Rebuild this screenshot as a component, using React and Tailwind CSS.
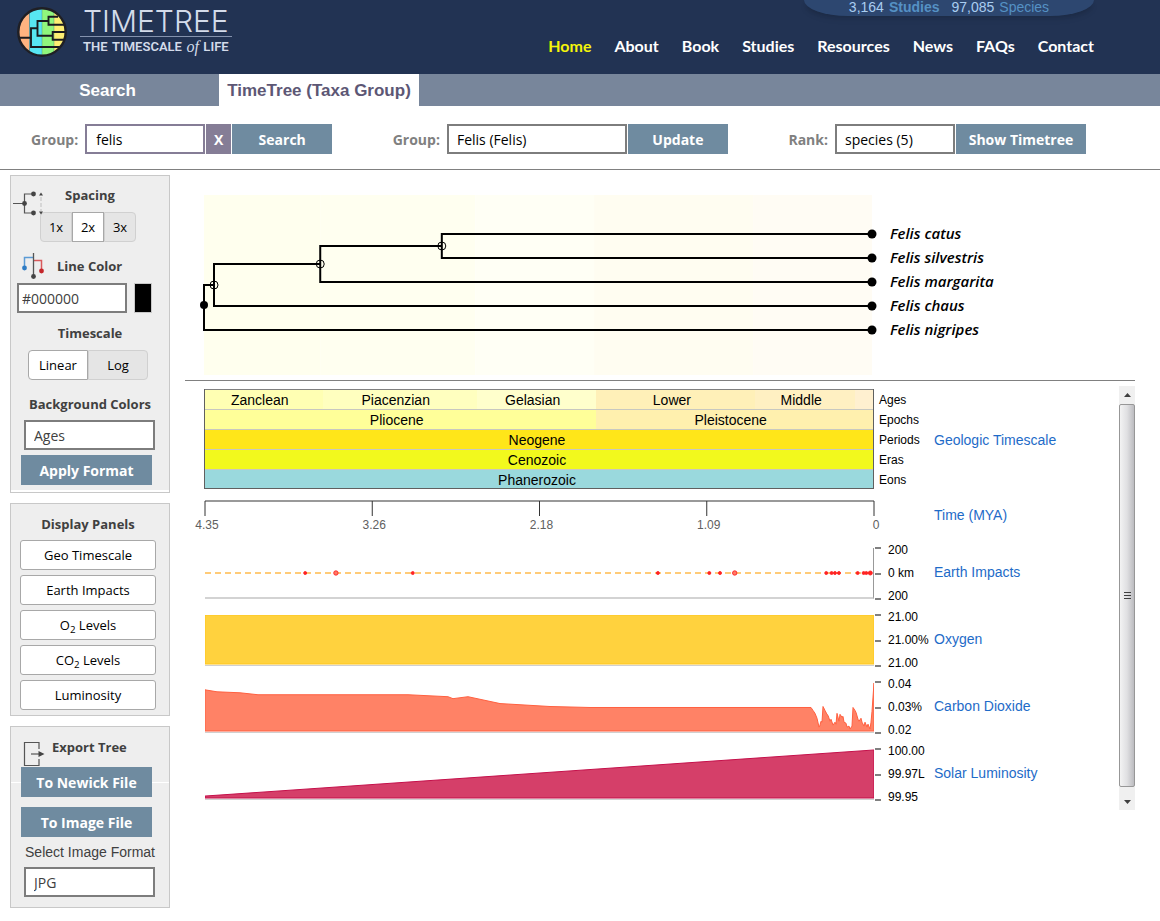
import { useState } from "react";
import clsx from "clsx";

const NAV_LINKS = ["Home", "About", "Book", "Studies", "Resources", "News", "FAQs", "Contact"];

const SPECIES = ["Felis catus", "Felis silvestris", "Felis margarita", "Felis chaus", "Felis nigripes"];

// Background stripes behind the tree, one per age (width in % of the plot)
const AGE_STRIPES = [
  { x: 0, width: 17.4, color: "#ffffee" },
  { x: 17.4, width: 23.2, color: "#fffff0" },
  { x: 40.6, width: 17.8, color: "#fffff5" },
  { x: 58.4, width: 23.8, color: "#fffdf1" },
  { x: 82.2, width: 17.8, color: "#fffcf4" },
];

// Tree branches as [x1%, y1, x2%, y2]
const BRANCHES = [
  [0, 89, 0, 136],
  [0, 90, 1.5, 90],
  [0, 135, 100, 135],
  [1.5, 68, 1.5, 112],
  [1.5, 69, 17.4, 69],
  [1.5, 111, 100, 111],
  [17.4, 50, 17.4, 88],
  [17.4, 51, 35.6, 51],
  [17.4, 87, 100, 87],
  [35.6, 38, 35.6, 64],
  [35.6, 39, 100, 39],
  [35.6, 63, 100, 63],
];

const OPEN_NODES = [
  [1.5, 90],
  [17.4, 69],
  [35.6, 51],
];

const GEO_ROWS = [
  {
    label: "Ages",
    cells: [
      { name: "Zanclean", width: 17.6, color: "#ffffb3" },
      { name: "Piacenzian", width: 23.1, color: "#ffffbf" },
      { name: "Gelasian", width: 17.9, color: "#ffffcc" },
      { name: "Lower", width: 23.8, color: "#fff0b8" },
      { name: "Middle", width: 14.9, color: "#fff0c2" },
      { name: "", width: 2.7, color: "#fff0d0" },
    ],
  },
  {
    label: "Epochs",
    cells: [
      { name: "Pliocene", width: 58.6, color: "#ffff99" },
      { name: "Pleistocene", width: 41.4, color: "#fff0ae" },
    ],
  },
  { label: "Periods", cells: [{ name: "Neogene", width: 100, color: "#ffe619" }] },
  { label: "Eras", cells: [{ name: "Cenozoic", width: 100, color: "#f2f91d" }] },
  { label: "Eons", cells: [{ name: "Phanerozoic", width: 100, color: "#9ad9dd" }] },
];

const TIME_TICKS = [
  { x: 0, label: "4.35" },
  { x: 25, label: "3.26" },
  { x: 50, label: "2.18" },
  { x: 75, label: "1.09" },
  { x: 100, label: "0" },
];

// Impact craters: position in % and radius
const IMPACTS = [
  [15, 1.5], [19.6, 2.2], [31.1, 1.5], [67.8, 1.5], [75.5, 1.5], [77.1, 1.5], [79.3, 2.2],
  [93, 1.5], [93.8, 1.5], [94.3, 1.5], [94.9, 1.5], [97.7, 1.5], [98.6, 1.5], [99, 1.5], [99.6, 2],
];

const CO2_POINTS =
  "0,50 0,8 12,10 35,11 53,13 203,13 243,15 248,17 263,15 295,22 345,25 385,26 606,26 608,29 610,32 612,37 " +
  "614,46 615,44 616,40 617,41 618,25 620,29 622,33 623,34 625,40 626,38 628,44 630,41 631,43 632,32 634,40 " +
  "635,33 637,36 638,35 639,41 641,42 642,46 644,45 645,48 647,45 648,26 650,29 651,31 653,38 654,40 656,37 " +
  "657,41 659,45 660,41 662,46 663,43 665,48 666,41 667,30 669,1 669,50";

const PANELS = [
  { id: "geo", button: "Geo Timescale" },
  { id: "impacts", button: "Earth Impacts" },
  { id: "oxygen", button: <>O<sub>2</sub> Levels</> },
  { id: "co2", button: <>CO<sub>2</sub> Levels</> },
  { id: "luminosity", button: "Luminosity" },
];

function Logo() {
  return (
    <a href="#" className="flex items-start gap-[13px] pt-[7px] pl-[17px] text-[#d3dbea]">
      <svg width="50" height="50" viewBox="0 0 50 50" className="shrink-0">
        <clipPath id="logo-disc">
          <circle cx="25" cy="25" r="23.5" />
        </clipPath>
        <g clipPath="url(#logo-disc)">
          <rect width="12.5" height="50" fill="#ffb380" />
          <rect x="12.5" width="12.5" height="50" fill="#57e6f2" />
          <rect x="25" width="12" height="50" fill="#90f67c" />
          <rect x="37" width="13" height="50" fill="#fdee72" />
          <path d="M12.5 0V50M25 0V50M37 0V50" stroke="#3a6f7a" strokeOpacity="0.5" strokeWidth="0.7" />
          <path
            d="M0 30.7H14M44 40H14V21.3H20.5M31.5 14H20.5V28.7H35.7M41 9.7H31.5V17.7H48M49 25H35.7V32.7H48"
            fill="none"
            stroke="#1b1b1f"
            strokeWidth="1.9"
          />
        </g>
        <circle cx="25" cy="25" r="23.7" fill="none" stroke="#1f1f24" strokeWidth="2.4" />
      </svg>
      <span className="flex flex-col">
        <span className="border-b border-[#8492ad] px-[3px] font-['Inter',sans-serif] text-[30px] leading-[29px] font-light">
          TIMETREE
        </span>
        <span className="flex justify-between px-[3px] font-['Roboto',sans-serif] text-[13px] leading-5 font-semibold">
          <span>THE</span>
          <span>TIMESCALE</span>
          <i className="font-['Liberation_Serif',serif] text-[16px] font-normal">of</i>
          <span>LIFE</span>
        </span>
      </span>
    </a>
  );
}

function Header() {
  return (
    <header className="flex h-[74px] justify-between bg-[#223353] pr-[66px]">
      <Logo />
      <div className="flex flex-col items-end">
        <div className="flex h-4 w-[290px] justify-center gap-3 rounded-b-[44px_16px] bg-[#2d4770] font-['Liberation_Sans',sans-serif] text-[14px] leading-[14px] text-[#a9cdf0] shadow-md">
          <span className="flex gap-[5px]">
            3,164 <b className="text-[#5591c4]">Studies</b>
          </span>
          <span className="flex gap-[5px]">
            97,085 <span className="text-[#5591c4]">Species</span>
          </span>
        </div>
        <nav className="mt-5 flex gap-[23px] font-['Lato',sans-serif] text-[16px] leading-5 font-bold text-white">
          {NAV_LINKS.map((link) => (
            <a key={link} href="#" className={clsx(link === "Home" && "text-[#f5f50a]")}>
              {link}
            </a>
          ))}
        </nav>
      </div>
    </header>
  );
}

function Tabs() {
  return (
    <div className="flex h-8 bg-[#78869b] font-['Liberation_Sans',sans-serif] text-[17px] font-bold">
      <button className="w-[219px] pt-0.5 pr-1 text-white">Search</button>
      <button className="w-[200px] bg-white pt-0.5 text-[#5d5775]">TimeTree (Taxa Group)</button>
    </div>
  );
}

function ActionButton({ className, children }) {
  return (
    <button className={clsx("h-[30px] bg-[#6f8ba0] text-[14px] font-bold text-white", className)}>{children}</button>
  );
}

function SelectBox({ id, options, className }) {
  return (
    <select
      id={id}
      className={clsx("h-[30px] appearance-none border-2 border-[#7d7d7d] bg-white px-2 text-[14px]", className)}
    >
      {options.map((option) => (
        <option key={option}>{option}</option>
      ))}
    </select>
  );
}

function Toolbar() {
  return (
    <form
      className="flex items-center justify-between border-b border-[#808080] pt-[18px] pr-[74px] pb-[15px] pl-[31px]"
      onSubmit={(e) => e.preventDefault()}
    >
      <div className="flex items-center gap-px">
        <label htmlFor="query" className="mr-1.5 text-[14px] font-bold text-[#808080]">
          Group:
        </label>
        <input
          id="query"
          defaultValue="felis"
          className="h-[30px] w-[120px] border-2 border-[#857d96] bg-white px-[9px] text-[14px] text-black"
        />
        <button className="h-[30px] w-[25px] bg-[#857d96] text-[14px] font-bold text-white">X</button>
        <ActionButton className="w-[100px]">Search</ActionButton>
      </div>
      <div className="flex items-center gap-px">
        <label htmlFor="group" className="mr-1.5 text-[14px] font-bold text-[#808080]">
          Group:
        </label>
        <SelectBox id="group" options={["Felis (Felis)"]} className="w-[180px] text-black" />
        <ActionButton className="w-[100px]">Update</ActionButton>
      </div>
      <div className="flex items-center gap-px">
        <label htmlFor="rank" className="mr-1.5 text-[14px] font-bold text-[#808080]">
          Rank:
        </label>
        <SelectBox id="rank" options={["species (5)"]} className="w-[120px] text-black" />
        <ActionButton className="w-[130px]">Show Timetree</ActionButton>
      </div>
    </form>
  );
}

function SpacingIcon() {
  return (
    <svg width="31" height="28" viewBox="0 0 31 28" className="absolute top-3.5 left-0.5">
      <path d="M0 13.5H11M21 4H11.5V23H21" fill="none" stroke="#555" strokeWidth="1.2" />
      <g fill="#444">
        <circle cx="11.5" cy="13.5" r="2.4" />
        <circle cx="20.5" cy="4" r="2.4" />
        <circle cx="20.5" cy="23" r="2.4" />
        <path d="M28 2.5L30 5.5H26ZM28 24.5L26 21.5H30Z" />
      </g>
      <path d="M28 7V21" stroke="#d0d0d0" strokeWidth="1.6" strokeDasharray="4 2" />
    </svg>
  );
}

function LineColorIcon() {
  return (
    <svg width="22" height="26" viewBox="0 0 22 26">
      <path d="M2.5 14V4.5H11" fill="none" stroke="#5b9bd5" strokeWidth="1.5" />
      <path d="M11 7.5H19.5V18" fill="none" stroke="#d9595b" strokeWidth="1.5" />
      <path d="M11.5 0V23" stroke="#555" strokeWidth="1.3" />
      <circle cx="2.5" cy="15" r="2.4" fill="#2f7cc4" />
      <circle cx="19.5" cy="18" r="2.4" fill="#c4262a" />
      <circle cx="11.5" cy="23.5" r="2.4" fill="#444" />
    </svg>
  );
}

function ExportIcon() {
  return (
    <svg width="22" height="26" viewBox="0 0 22 26">
      <path d="M16 8V1.5H1.5V24.5H16V18" fill="none" stroke="#555" strokeWidth="1.2" />
      <path d="M8 13H16" stroke="#555" strokeWidth="1.2" />
      <path d="M15.5 10L21.5 13L15.5 16Z" fill="#444" />
    </svg>
  );
}

function ToggleGroup({ label, options, value, onChange, className }) {
  return (
    <div role="group" aria-label={label} className={clsx("flex h-[30px] text-[13px] text-black", className)}>
      {options.map((option) => (
        <button
          key={option}
          aria-pressed={option === value}
          onClick={() => onChange(option)}
          className={clsx(
            "flex-1 border pt-0.5 first:rounded-l last:rounded-r",
            option === value ? "border-[#a8a8a8] bg-white" : "border-[#d0d0d0] bg-[#e5e5e5]"
          )}
        >
          {option}
        </button>
      ))}
    </div>
  );
}

function Sidebar({ visible, onToggle }) {
  const [spacing, setSpacing] = useState("2x");
  const [scale, setScale] = useState("Linear");

  return (
    <aside className="flex w-40 shrink-0 flex-col gap-2.5 text-[13px] text-[#404040]">
      <section className="relative flex flex-col border border-[#c8c8c8] bg-[#eee] pt-[9px]">
        <SpacingIcon />
        <h2 className="text-center leading-5 font-bold">Spacing</h2>
        <ToggleGroup
          label="Spacing"
          options={["1x", "2x", "3x"]}
          value={spacing}
          onChange={setSpacing}
          className="mt-[7px] ml-[29px] w-24"
        />
        <div className="mt-[9px] flex items-center gap-[13px] pl-[11px]">
          <LineColorIcon />
          <h2 className="leading-[30px] font-bold">
            <label htmlFor="line-color">Line Color</label>
          </h2>
        </div>
        <div className="mt-0.5 flex gap-[7px] pl-1.5">
          <input
            id="line-color"
            defaultValue="#000000"
            className="h-[30px] w-[110px] border-2 border-[#7d7d7d] bg-white px-[3px] text-[14px]"
          />
          <button aria-label="Pick line color" className="h-[30px] w-[18px] border border-[#c8c8c8] bg-black" />
        </div>
        <h2 className="mt-2.5 text-center leading-5 font-bold">Timescale</h2>
        <ToggleGroup
          label="Timescale"
          options={["Linear", "Log"]}
          value={scale}
          onChange={setScale}
          className="mt-[7px] ml-[17px] w-[120px]"
        />
        <h2 className="mt-3.5 text-center leading-5 font-bold">
          <label htmlFor="background">Background Colors</label>
        </h2>
        <SelectBox id="background" options={["Ages", "Epochs", "Periods"]} className="mt-1.5 ml-[13px] w-[131px]" />
        <ActionButton className="mt-[5px] ml-2.5 w-[131px]">Apply Format</ActionButton>
        <div className="mt-[5px] h-0.5 bg-white" />
      </section>

      <section className="flex flex-col gap-[5px] border border-[#c8c8c8] bg-[#eee] pt-2.5 pr-[13px] pb-[5px] pl-[9px]">
        <h2 className="mb-px text-center leading-5 font-bold">Display Panels</h2>
        {PANELS.map(({ id, button }) => (
          <button
            key={id}
            aria-pressed={visible[id]}
            onClick={() => onToggle(id)}
            className="h-[30px] rounded-[3px] border border-[#a8a8a8] bg-white pt-0.5 text-black"
          >
            {button}
          </button>
        ))}
      </section>

      <section className="flex flex-col border border-[#c8c8c8] bg-[#eee] pt-2.5 pb-2.5">
        <div className="flex gap-[7px] pl-3">
          <div className="pt-1">
            <ExportIcon />
          </div>
          <h2 className="leading-5 font-bold">Export Tree</h2>
        </div>
        <div className="flex items-center">
          <span className="h-px w-2.5 bg-white" />
          <ActionButton className="w-[131px]">To Newick File</ActionButton>
          <span className="h-px flex-1 bg-white" />
        </div>
        <ActionButton className="mt-2.5 ml-2.5 w-[131px]">To Image File</ActionButton>
        <label
          htmlFor="image-format"
          className="mt-[5px] text-center font-['Liberation_Sans',sans-serif] text-[14px] leading-5"
        >
          Select Image Format
        </label>
        <SelectBox id="image-format" options={["JPG", "PNG", "SVG"]} className="mt-[5px] ml-[13px] w-[131px]" />
      </section>
    </aside>
  );
}

function Tree() {
  return (
    <div className="flex border-b border-[#808080] pt-5 pb-[5px] pl-[19px]">
      <svg className="h-[180px] min-w-0 flex-1 overflow-visible">
        {AGE_STRIPES.map((s) => (
          <rect key={s.x} x={`${s.x}%`} width={`${s.width}%`} height="180" fill={s.color} />
        ))}
        {BRANCHES.map(([x1, y1, x2, y2], i) => (
          <line key={i} x1={`${x1}%`} y1={y1} x2={`${x2}%`} y2={y2} stroke="#000" strokeWidth="2" />
        ))}
        {OPEN_NODES.map(([x, y]) => (
          <circle key={x} cx={`${x}%`} cy={y} r="4" fill="none" stroke="#000" />
        ))}
        <circle cx="0" cy="110" r="4" />
        {SPECIES.map((name, i) => (
          <circle key={name} cx="100%" cy={39 + i * 24} r="4.5" />
        ))}
      </svg>
      <ul className="w-[263px] pt-[26px] pl-[18px] text-[15px] leading-6 font-semibold text-black italic">
        {SPECIES.map((name) => (
          <li key={name}>{name}</li>
        ))}
      </ul>
    </div>
  );
}

function PanelLink({ children }) {
  return (
    <a href="#" className="text-[14px] leading-5 text-[#1e6bc8]">
      {children}
    </a>
  );
}

function GeoTimescale() {
  return (
    <div className="flex h-[100px]">
      <div className="min-w-0 flex-1 border-x border-b border-[#606060] text-[14px] text-black">
        {GEO_ROWS.map((row, i) => (
          <div
            key={row.label}
            className={clsx("flex h-5 border-t last:h-[19px]", i === 0 ? "border-[#808080]" : "border-[#c8c8c0]")}
          >
            {row.cells.map((cell) => (
              <div
                key={cell.name}
                className={clsx("text-center leading-5", i < 2 ? "pr-2" : "pr-1")}
                style={{ width: `${cell.width}%`, backgroundColor: cell.color }}
              >
                {cell.name}
              </div>
            ))}
          </div>
        ))}
      </div>
      <div className="w-[60px] pt-px pl-[5px] text-[12px] leading-5 text-black">
        {GEO_ROWS.map((row) => (
          <div key={row.label}>{row.label}</div>
        ))}
      </div>
      <div className="flex w-[185px] items-center pt-0.5">
        <PanelLink>Geologic Timescale</PanelLink>
      </div>
    </div>
  );
}

function TimeAxis() {
  return (
    <div className="mt-2.5 flex h-[41px]">
      <div className="min-w-0 flex-1 pl-px">
        <svg className="block h-10 w-full overflow-visible">
          <line x1="0" x2="100%" y1="2" y2="2" stroke="#999" strokeWidth="2" />
          {TIME_TICKS.map((tick) => (
            <g key={tick.label}>
              <line x1={`${tick.x}%`} x2={`${tick.x}%`} y1="2" y2="17" stroke="#333" />
              <text x={`${tick.x}%`} dx="2" y="30" textAnchor="middle" className="fill-[#606060] text-[12px]">
                {tick.label}
              </text>
            </g>
          ))}
        </svg>
      </div>
      <div className="w-[245px] pt-1 pl-[60px]">
        <PanelLink>Time (MYA)</PanelLink>
      </div>
    </div>
  );
}

function ChartPanel({ title, labels, children }) {
  return (
    <div className="flex h-[67px]">
      <div className="min-w-0 flex-1 py-2 pl-px">{children}</div>
      <div className="flex w-[60px] gap-[7px] text-[12px] leading-4 text-black">
        <div className="my-[7px] flex w-[7px] flex-col justify-between pl-px">
          <span className="h-0.5 bg-[#808080]" />
          <span className="h-0.5 bg-[#808080]" />
          <span className="h-0.5 bg-[#808080]" />
        </div>
        <div className="flex flex-col justify-between pt-0.5 pb-[3px]">
          {labels.map((label, i) => (
            <span key={i}>{label}</span>
          ))}
        </div>
      </div>
      <div className="flex w-[185px] items-center pb-1">
        <PanelLink>{title}</PanelLink>
      </div>
    </div>
  );
}

function AreaPlot({ points, fill, stroke }) {
  return (
    <svg viewBox="0 0 669 51" preserveAspectRatio="none" className="block h-[51px] w-full border-b border-[#d0d0d0]">
      <polygon points={points} fill={fill} stroke={stroke} vectorEffect="non-scaling-stroke" />
    </svg>
  );
}

function Charts({ visible }) {
  return (
    <div className="min-w-0 flex-1 pt-[3px] pl-[19px] font-['Liberation_Sans',sans-serif]">
      {visible.geo && <GeoTimescale />}
      <TimeAxis />
      {visible.impacts && (
        <ChartPanel title="Earth Impacts" labels={["200", "0 km", "200"]}>
          <svg className="block h-[51px] w-full border-r border-b-2 border-[#d3d3d3] border-r-[#999]">
            <line x1="0" x2="100%" y1="25" y2="25" stroke="#ffcb78" strokeWidth="2" strokeDasharray="6 4" />
            {IMPACTS.map(([x, r]) => (
              <circle key={x} cx={`${x}%`} cy="25" r={r} fill={r > 2 ? "#ff7a66" : "#f22"} stroke="#f22" strokeWidth="0.9" />
            ))}
          </svg>
        </ChartPanel>
      )}
      {visible.oxygen && (
        <ChartPanel title="Oxygen" labels={["21.00", "21.00%", "21.00"]}>
          <AreaPlot points="0,0 669,0 669,50 0,50" fill="#ffd23e" stroke="#ffc61e" />
        </ChartPanel>
      )}
      {visible.co2 && (
        <ChartPanel title="Carbon Dioxide" labels={["0.04", "0.03%", "0.02"]}>
          <AreaPlot points={CO2_POINTS} fill="#ff8266" stroke="#ff6040" />
        </ChartPanel>
      )}
      {visible.luminosity && (
        <ChartPanel title="Solar Luminosity" labels={["100.00", "99.97L", "99.95"]}>
          <AreaPlot points="0,48 669,1 669,50 0,50" fill="#d53f69" stroke="#c4104a" />
        </ChartPanel>
      )}
    </div>
  );
}

function ScrollBar() {
  return (
    <div className="flex w-4 shrink-0 flex-col bg-[#f0f0f0]">
      <button aria-label="Scroll up" className="flex h-[18px] items-center justify-center">
        <svg width="7" height="4" viewBox="0 0 7 4">
          <path d="M3.5 0L7 4H0Z" fill="#404040" />
        </svg>
      </button>
      <div className="flex flex-1 items-center justify-center rounded-xs border border-[#979797] bg-linear-to-r from-[#f3f3f3] via-[#e0e0e2] to-[#bcbcc0]">
        <svg width="7" height="9" viewBox="0 0 7 9">
          <path d="M0 1.5H7M0 4.5H7M0 7.5H7" stroke="#404040" />
        </svg>
      </div>
      <button aria-label="Scroll down" className="flex h-[23px] items-center justify-center pt-1.5">
        <svg width="7" height="4" viewBox="0 0 7 4">
          <path d="M0 0H7L3.5 4Z" fill="#404040" />
        </svg>
      </button>
    </div>
  );
}

export default function App() {
  const [visible, setVisible] = useState({
    geo: true,
    impacts: true,
    oxygen: true,
    co2: true,
    luminosity: true,
  });

  const togglePanel = (id) => setVisible((v) => ({ ...v, [id]: !v[id] }));

  return (
    <div className="bg-white font-['Open_Sans',sans-serif]">
      <Header />
      <Tabs />
      <Toolbar />
      <div className="flex gap-[15px] pt-[5px] pr-[25px] pb-[13px] pl-2.5">
        <Sidebar visible={visible} onToggle={togglePanel} />
        <main className="min-w-0 flex-1">
          <Tree />
          <div className="mt-[5px] flex min-h-[424px]">
            <Charts visible={visible} />
            <ScrollBar />
          </div>
        </main>
      </div>
    </div>
  );
}
